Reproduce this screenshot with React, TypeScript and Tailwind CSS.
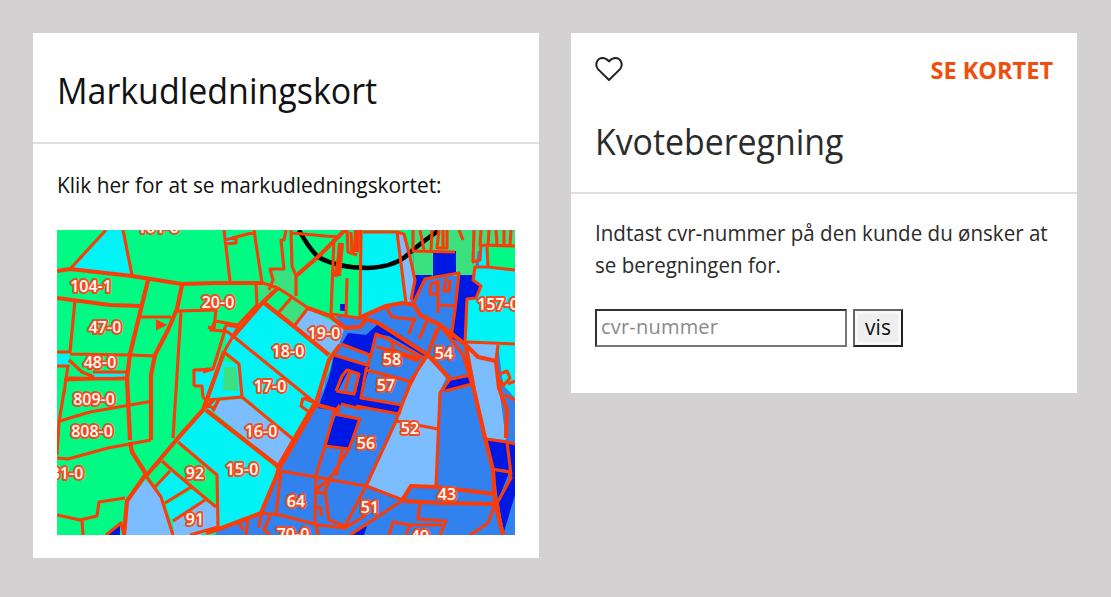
import type { ReactNode } from "react";

const COLORS = {
  green: "#00fa84",
  mint: "#3be07f",
  cyan: "#00f4f5",
  sky: "#7bbdff",
  blue: "#3182ee",
  navy: "#0018e4",
  line: "#fb3c08",
};

interface Field {
  fill: keyof typeof COLORS;
  points: string;
}

// Fields are listed back to front
const fields: Field[] = [
  { fill: "blue", points: "279,467 313,407 330,370 334,350 345,328 356,321 386,306 409,301 414,275 413,251 480,251 480,340 515,340 515,535 215,535 219,528 261,513" },
  { fill: "cyan", points: "106,230 123,230 132,276 72,269" },
  { fill: "cyan", points: "57,354 69,354 68,366 57,365" },
  { fill: "cyan", points: "93,372 127,372 127,378 93,377" },
  { fill: "cyan", points: "263,303 329,356 324,388 314,404 233,335" },
  { fill: "cyan", points: "233,338 314,402 306,413 293,439 241,396 239,365 224,351" },
  { fill: "cyan", points: "214,362 225,361 239,365 242,398 220,398 208,403 203,396 202,386 194,386 194,371 210,370" },
  { fill: "mint", points: "224,367 236,367 238,391 223,390" },
  { fill: "cyan", points: "203,412 206,411 277,469 261,513 219,529 218,478 177,441" },
  { fill: "cyan", points: "170,471 191,487 164,502 155,486" },
  { fill: "cyan", points: "193,489 204,500 172,522 166,505" },
  { fill: "cyan", points: "226,324 238,327 233,336 226,345" },
  { fill: "cyan", points: "206,399 216,399 212,410 206,410" },
  { fill: "cyan", points: "224,235 232,235 232,242 225,243" },
  { fill: "cyan", points: "363,232 398,233 406,303 386,306 359,318" },
  { fill: "sky", points: "398,233 404,235 409,256 415,278 411,301 406,303" },
  { fill: "sky", points: "219,401 241,399 293,440 279,466 213,411" },
  { fill: "sky", points: "308,309 344,328 339,345 328,355 295,325" },
  { fill: "sky", points: "146,480 160,496 173,535 124,535 128,500" },
  { fill: "sky", points: "203,501 218,507 218,528 200,535 174,535 173,523" },
  { fill: "mint", points: "273,271 296,272 296,298 279,287 262,300 257,284 273,284" },
  { fill: "green", points: "279,288 292,297 279,311 265,302" },
  { fill: "mint", points: "293,297 308,309 294,325 279,312" },
  { fill: "mint", points: "413,230 481,230 474,276 414,276" },
  { fill: "mint", points: "481,230 515,230 515,246 481,246" },
  { fill: "green", points: "486,246 515,246 515,270 488,267" },
  { fill: "cyan", points: "479,250 486,246 488,267 479,267" },
  { fill: "navy", points: "433,251 456,251 456,275 484,275 484,298 467,300 466,345 451,338 458,274 433,276" },
  { fill: "navy", points: "414,275 433,275 425,280 413,303" },
  { fill: "cyan", points: "475,267 515,270 515,343 466,341 467,299 476,298 481,286 473,280" },
  { fill: "cyan", points: "498,344 515,344 515,398 503,385" },
  { fill: "sky", points: "466,343 498,344 496,360 499,388 506,440 485,438 474,388 469,356" },
  { fill: "blue", points: "334,314 345,315 360,318 365,330 345,329" },
  { fill: "navy", points: "348,333 366,335 379,323 402,336 428,353 424,356 389,336 376,334 371,356 341,345" },
  { fill: "navy", points: "334,356 370,365 361,398 401,405 399,415 356,406 339,405 336,411 318,408 329,378" },
  { fill: "blue", points: "349,370 359,375 356,393 338,391" },
  { fill: "navy", points: "336,415 358,419 349,448 325,445" },
  { fill: "navy", points: "449,381 471,376 471,384 444,391" },
  { fill: "sky", points: "428,356 446,378 439,393 436,486 411,485 403,499 368,485 396,421 411,381" },
  { fill: "navy", points: "486,439 508,442 509,470 492,468" },
  { fill: "navy", points: "494,471 509,473 498,500" },
  { fill: "navy", points: "508,444 515,444 515,495 503,535 499,503 511,477" },
  { fill: "navy", points: "106,535 120,524 120,535" },
  { fill: "navy", points: "356,530 367,526 364,535 350,535" },
  { fill: "navy", points: "340,304 346,304 346,311 340,311" },
];

const heavyLines = [
  "M57 271 L70 269 L132 276 L182 284 L216 283 L263 283",
  "M57 298 L110 305 L141 306 M148 280 L130 354 L127 378 L130 440",
  "M182 285 L177 309 L168 330 L155 355 L151 375 L151 440",
  "M146 476 L178 438 L203 410 L224 352 M232 338 L263 302 L278 288",
  "M206 410 L279 467 M277 469 L316 403 L329 360 L340 345",
  "M130 442 L132 452 L146 474 L127 501 L124 535",
  "M279 467 L277 475 L261 513 L219 529 L206 533",
  "M296 276 L320 255 L345 230",
  "M359 318 L386 306 L402 303 L414 305 L420 315 L440 325 L466 345 L478 357 L496 361 L499 388 L507 410 L506 438",
  "M466 347 L474 390 L485 438 L493 470 L495 502 L503 535",
  "M263 302 L296 328 L329 355",
  "M308 308 L330 316 L345 328 L360 327 L366 319 L378 323 L428 355 L450 379",
  "M314 404 L340 411",
  "M403 499 L411 486 L436 487 L495 494",
  "M403 501 L440 503 L495 504",
];

const lines = [
  "M106 230 L71 268 M123 230 L132 275 M75 300 L70 352 L57 352 M70 354 L130 355 L155 356",
  "M57 366 L68 366 L64 392 L59 422 L57 455 M69 360 L82 372 L94 377 M68 378 L127 379 M93 372 L127 372 M66 378 L64 394",
  "M64 380 L127 378 M60 421 L90 412 L153 401 M57 458 L68 459 L108 448 L151 440",
  "M141 317 L171 317 M177 311 L216 310 L214 329 L208 327 M181 311 L173 438",
  "M203 372 L213 369 L206 369 M194 386 L194 370 L213 369 L225 330 M194 386 L202 386 L203 397 L208 402",
  "M57 515 L80 520 L97 516 L99 502 L125 498 M82 520 L83 535 M106 535 L121 523 L124 535",
  "M224 230 L230 281 M254 230 L262 283 M225 240 L255 232 M224 244 L236 243 L236 236",
  "M286 230 L284 240 L281 240 L284 269 L270 269 L273 280 L269 290 M291 230 L292 266 L296 276 L296 296",
  "M256 283 L257 305 L238 325 L215 321 L211 330 L224 331 L226 325 M263 283 L278 288",
  "M278 288 L292 297 L308 308 L295 325 M278 288 L264 302 M292 297 L279 312",
  "M226 325 L238 327 L233 336 L225 330 M233 336 L314 402 M233 336 L224 352 L239 364 L242 397",
  "M213 411 L219 399 L242 397 L294 440 M219 399 L206 400 M206 404 L213 408 M205 408 L215 399",
  "M178 442 L217 475 L218 528 M162 461 L172 470 L192 487 L216 507 M170 471 L154 488",
  "M160 461 L146 476 L161 497 L173 535 M191 487 L165 503 M205 500 L173 521 M190 535 L218 527",
  "M303 398 L301 406 L309 412 M303 398 L316 403",
  "M292 233 L325 236 L340 237 M334 239 L331 314 M341 243 L336 277 M342 243 L335 276",
  "M347 230 L348 252 L357 255 M356 230 L355 252 M351 232 L352 252 M347 278 L346 317 M331 314 L359 318",
  "M361 230 L360 317 M363 232 L397 232 L406 303 M397 232 L404 234 L410 257 L415 280 L411 300",
  "M413 230 L413 251 L455 252 M420 230 L424 250 M432 230 L431 251 M439 230 L437 248 L447 248 L447 230 M443 230 L443 248 M459 230 L463 240",
  "M474 230 L473 262 L480 260 L481 244 M481 230 L480 245 L515 246 M489 230 L488 245 M496 230 L497 245 M504 230 L504 245 M511 230 L510 245",
  "M487 247 L488 267 L475 267 L473 280 L481 286 L476 298 L467 299 L465 343 M488 267 L515 270 M467 342 L515 344",
  "M413 304 L425 279 L459 273 L455 310 L451 338 M431 283 L430 294 L438 294 L437 283 L431 283 M438 280 L438 313 M440 305 L455 306 M446 278 L444 291 L449 291 L450 280",
  "M415 317 L409 334 M427 321 L419 339 M437 328 L429 350 M386 307 L392 317 L416 320 M440 325 L428 354",
  "M440 325 L463 355 L472 385 M450 379 L472 375 M450 379 L440 393 L436 486 M445 391 L472 384",
  "M428 355 L411 380 L396 421 L366 486 M396 421 L438 429",
  "M371 355 L376 334 L390 340 L424 358 L410 385 L402 405 L399 414 L356 406 M392 340 L393 350 L420 359 M376 347 L389 350 L418 361",
  "M371 355 L366 370 L361 398 L402 405 M366 370 L398 378 L411 382 M341 344 L370 355 M334 355 L370 366",
  "M336 391 L342 376 L347 370 L359 374 L354 394 L336 391 M350 372 L345 390",
  "M340 405 L334 413 L325 446 L349 449 L360 419 L334 414 M341 404 L361 409",
  "M281 471 L366 486 L403 500 L350 535 M366 486 L345 526 M325 446 L316 475 L315 520 L318 535",
  "M349 449 L330 478 L316 490 M342 450 L336 476 M330 478 L325 491 L329 520 L345 526 M316 492 L327 494 M316 507 L321 508 L321 516",
  "M281 471 L276 515 M261 513 L280 515 L318 525 L345 528 L366 515 M261 513 L259 528 M248 517 L246 535 M238 521 L243 530 M270 516 L264 530 L270 535",
  "M420 502 L418 519 L446 521 L440 535 M389 535 L393 522 L410 525 L406 535 M410 525 L442 525 M495 504 L488 523 L470 535",
  "M486 439 L507 442 L515 444 M492 469 L509 472 L511 478 L497 503 L503 535 M507 442 L511 475",
  "M498 345 L496 360 M500 374 L507 371 L510 378 L503 386 L501 380 M508 384 L515 381 M505 395 L515 400",
];

const labels: [string, number, number][] = [
  ["101-0", 158, 233],
  ["104-1", 91, 292],
  ["47-0", 105, 333],
  ["48-0", 100, 368],
  ["809-0", 94, 405],
  ["808-0", 92, 437],
  ["31-0", 67, 479],
  ["20-0", 218, 308],
  ["19-0", 324, 339],
  ["18-0", 288, 357],
  ["17-0", 270, 392],
  ["16-0", 261, 437],
  ["15-0", 242, 475],
  ["92", 195, 479],
  ["91", 195, 525],
  ["58", 392, 365],
  ["54", 444, 359],
  ["57", 386, 391],
  ["56", 366, 449],
  ["52", 410, 434],
  ["43", 447, 500],
  ["64", 296, 507],
  ["51", 370, 513],
  ["70-0", 293, 540],
  ["49", 420, 542],
  ["157-0", 498, 310],
];

function FieldMap() {
  return (
    <svg viewBox="57 230 458 305" className="block h-[305px] w-[458px]">
      <rect x="57" y="230" width="458" height="305" fill={COLORS.green} />
      {fields.map((field) => (
        <polygon key={field.points} points={field.points} fill={COLORS[field.fill]} />
      ))}
      <path d="M299 230 Q308 247 318 257 Q338 268 368 268 Q392 267 405 257 Q418 245 438 231" fill="none" stroke="#000" strokeWidth="4.5" />
      <g fill="none" stroke={COLORS.line} strokeLinejoin="round">
        <path d={lines.join(" ")} strokeWidth="3.1" />
        <path d={heavyLines.join(" ")} strokeWidth="4.2" />
        <path d="M341 243 L338 276 M357 230 L356 252 M279 467 L316 403" strokeWidth="6" />
      </g>
      <path d="M157 321 L165 325 L157 329 Z" fill={COLORS.line} stroke={COLORS.line} strokeWidth="2" />
      <g
        fill="#fff"
        stroke="#f24d20"
        strokeWidth="4"
        strokeLinejoin="round"
        paintOrder="stroke"
        textAnchor="middle"
        className="font-['Open_Sans',sans-serif] text-[16px] font-semibold"
      >
        {labels.map(([name, x, y]) => (
          <text key={name} x={x} y={y}>
            {name}
          </text>
        ))}
      </g>
    </svg>
  );
}

function Card({ header, children }: { header: ReactNode; children: ReactNode }) {
  return (
    <section className="w-[506px] bg-white">
      <header className="border-b-2 border-[#dfdfdf] px-6">{header}</header>
      <div className="px-6">{children}</div>
    </section>
  );
}

export default function App() {
  return (
    <main className="flex h-[597px] w-[1111px] items-start gap-8 overflow-hidden bg-[#d3d1d1] p-[33px] font-['Open_Sans',sans-serif] text-[22px] text-[#111]">
      <Card
        header={
          <h2 className="flex h-[109px] items-center pt-1.5 text-[36px] whitespace-nowrap">
            <span className="origin-left scale-x-[0.943]">Markudledningskort</span>
          </h2>
        }
      >
        <p className="flex h-[86px] items-center pb-1.5 font-medium whitespace-nowrap">
          <span className="origin-left scale-x-[0.947]">Klik her for at se markudledningskortet:</span>
        </p>
        <a href="#" className="mb-[23px] block">
          <FieldMap />
        </a>
      </Card>

      <Card
        header={
          <>
            <div className="flex h-[72px] items-center justify-between">
              <button type="button" aria-label="Favorit">
                <svg viewBox="0 0 28 24" className="h-6 w-7" fill="none" stroke="#222" strokeWidth="2" strokeLinejoin="round">
                  <path d="M14 23 L3.2 12.4 C-0.6 8.2 1.8 1 7.6 1 C10.6 1 12.2 2.4 14 4.4 C15.8 2.4 17.4 1 20.4 1 C26.2 1 28.6 8.2 24.8 12.4 Z" />
                </svg>
              </button>
              <a href="#" className="origin-right scale-x-[0.98] pt-0.5 text-[24px] font-bold whitespace-nowrap text-[#f04e0a]">
                SE KORTET
              </a>
            </div>
            <h2 className="flex h-[87px] items-center pb-3.5 text-[36px] whitespace-nowrap text-[#2b2b2b]">
              <span className="origin-left scale-x-[0.94]">Kvoteberegning</span>
            </h2>
          </>
        }
      >
        <p className="mt-[22px] leading-8 font-medium whitespace-nowrap text-[#2b2b2b]">
          <span className="block origin-left scale-x-[0.934]">Indtast cvr-nummer på den kunde du ønsker at</span>
          <span className="block origin-left scale-x-[0.934]">se beregningen for.</span>
        </p>
        <form className="mt-[29px] mb-[46px] flex gap-[6px]">
          <input
            placeholder="cvr-nummer"
            className="h-[38px] w-[252px] border-2 border-t-[#333] border-r-[#777] border-b-[#777] border-l-[#333] px-1 pb-1 text-[20px] tracking-[0.01em] outline-none placeholder:text-[#8a8a8a]"
          />
          <button type="button" className="h-[38px] w-[50px] border-2 border-t-[#666] border-r-[#222] border-b-[#222] border-l-[#666] bg-[#efefef] pb-0.5 text-[21px] leading-none font-medium shadow-[inset_0_0_0_3px_#f8f8f8]">
            vis
          </button>
        </form>
      </Card>
    </main>
  );
}
